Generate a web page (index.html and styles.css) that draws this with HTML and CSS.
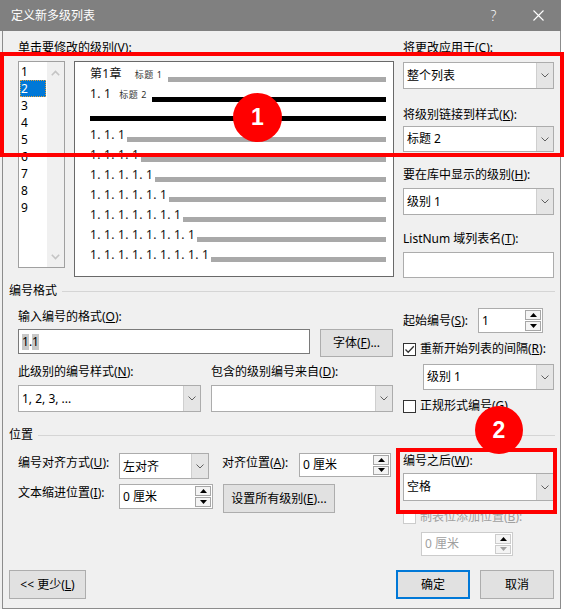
FILE: index.html
```html
<!DOCTYPE html>
<html lang="zh-CN">
<head>
<meta charset="utf-8">
<title>定义新多级列表</title>
<link rel="stylesheet" href="styles.css">
</head>
<body>
<div class="dialog">
  <div class="titlebar">
    <span class="title">定义新多级列表</span>
    <span class="tb-btn help">?</span>
    <span class="tb-btn close"><svg width="11" height="11" viewBox="0 0 11 11"><path d="M0.5 0.5 L10.5 10.5 M10.5 0.5 L0.5 10.5" stroke="#fff" stroke-width="1.1" fill="none"/></svg></span>
  </div>
  <div class="frame">
    <div class="top">
      <div class="top-left">
        <div class="lbl">单击要修改的级别(<u>V</u>):</div>
        <div class="level-row">
          <div class="levels">
            <ul class="level-items">
              <li>1</li>
              <li class="sel">2</li>
              <li>3</li>
              <li>4</li>
              <li>5</li>
              <li>6</li>
              <li>7</li>
              <li>8</li>
              <li>9</li>
            </ul>
            <div class="vscroll">
              <svg width="9" height="6" viewBox="0 0 9 6"><path d="M0.8 5.2 L4.5 1.5 L8.2 5.2" fill="none" stroke="#c4c4c4" stroke-width="1.6"/></svg>
              <svg width="9" height="6" viewBox="0 0 9 6"><path d="M0.8 0.8 L4.5 4.5 L8.2 0.8" fill="none" stroke="#c4c4c4" stroke-width="1.6"/></svg>
            </div>
          </div>
          <div class="preview">
            <div class="prow"><span class="num">第1章<span class="sty sty1">标题 1</span></span><i class="bar"></i></div>
            <div class="prow"><span class="num">1. 1<span class="sty sty2">标题 2</span></span><i class="bar blk"></i></div>
            <div class="prow"><i class="bar blk full"></i></div>
            <div class="prow"><span class="num">1. 1. 1</span><i class="bar"></i></div>
            <div class="prow"><span class="num">1. 1. 1. 1</span><i class="bar"></i></div>
            <div class="prow"><span class="num">1. 1. 1. 1. 1</span><i class="bar"></i></div>
            <div class="prow"><span class="num">1. 1. 1. 1. 1. 1</span><i class="bar"></i></div>
            <div class="prow"><span class="num">1. 1. 1. 1. 1. 1. 1</span><i class="bar"></i></div>
            <div class="prow"><span class="num">1. 1. 1. 1. 1. 1. 1. 1</span><i class="bar"></i></div>
            <div class="prow"><span class="num">1. 1. 1. 1. 1. 1. 1. 1. 1</span><i class="bar"></i></div>
          </div>
        </div>
      </div>
      <div class="col-right">
        <div class="lbl">将更改应用于(<u>C</u>):</div>
        <div class="combo r-c1"><span class="val">整个列表</span><span class="drop"><svg width="8" height="5" viewBox="0 0 8 5"><path d="M0.5 0.5 L4 4 L7.5 0.5" fill="none" stroke="#606060"/></svg></span></div>
        <div class="lbl r-l2">将级别链接到样式(<u>K</u>):</div>
        <div class="combo r-c2"><span class="val">标题 2</span><span class="drop"><svg width="8" height="5" viewBox="0 0 8 5"><path d="M0.5 0.5 L4 4 L7.5 0.5" fill="none" stroke="#606060"/></svg></span></div>
        <div class="lbl r-l3">要在库中显示的级别(<u>H</u>):</div>
        <div class="combo r-c3"><span class="val">级别 1</span><span class="drop"><svg width="8" height="5" viewBox="0 0 8 5"><path d="M0.5 0.5 L4 4 L7.5 0.5" fill="none" stroke="#606060"/></svg></span></div>
        <div class="lbl r-l4">ListNum 域列表名(<u>T</u>):</div>
        <div class="textbox r-t4"></div>
      </div>
    </div>

    <div class="group-head gh1"><span>编号格式</span><i class="rule"></i></div>
    <div class="grp">
      <div class="g-left">
        <div class="lbl g1-l1">输入编号的格式(<u>O</u>):</div>
        <div class="fmt-row">
          <div class="textbox fmt-input"><span class="fld">1</span>.<span class="fld">1</span></div>
          <div class="btn font-btn">字体(<u>F</u>)...</div>
        </div>
        <div class="pair lbl-pair">
          <div class="lbl">此级别的编号样式(<u>N</u>):</div>
          <div class="lbl">包含的级别编号来自(<u>D</u>):</div>
        </div>
        <div class="pair sel-pair">
          <div class="combo h27"><span class="val">1, 2, 3, ...</span><span class="drop"><svg width="8" height="5" viewBox="0 0 8 5"><path d="M0.5 0.5 L4 4 L7.5 0.5" fill="none" stroke="#606060"/></svg></span></div>
          <div class="combo h27"><span class="val"></span><span class="drop"><svg width="8" height="5" viewBox="0 0 8 5"><path d="M0.5 0.5 L4 4 L7.5 0.5" fill="none" stroke="#606060"/></svg></span></div>
        </div>
      </div>
      <div class="g-right">
        <div class="start-row">
          <span class="lbl start-lbl">起始编号(<u>S</u>):</span>
          <div class="spin start-spin">
            <span class="sv">1</span>
            <span class="sbtns">
              <span class="sb"><svg width="7" height="4" viewBox="0 0 7 4"><path d="M0 4 L3.5 0 L7 4Z" fill="#000"/></svg></span>
              <span class="sb"><svg width="7" height="4" viewBox="0 0 7 4"><path d="M0 0 L3.5 4 L7 0Z" fill="#000"/></svg></span>
            </span>
          </div>
        </div>
        <div class="chk-row cr1">
          <span class="chk"><svg width="11" height="11" viewBox="0 0 11 11"><path d="M1.5 5.5 L4.2 8.3 L9.8 2.2" fill="none" stroke="#333" stroke-width="1.3"/></svg></span>
          <span class="chk-lbl">重新开始列表的间隔(<u>R</u>):</span>
        </div>
        <div class="combo restart-combo"><span class="val">级别 1</span><span class="drop"><svg width="8" height="5" viewBox="0 0 8 5"><path d="M0.5 0.5 L4 4 L7.5 0.5" fill="none" stroke="#606060"/></svg></span></div>
        <div class="chk-row cr2">
          <span class="chk"></span>
          <span class="chk-lbl">正规形式编号(<u>G</u>)</span>
        </div>
      </div>
    </div>

    <div class="group-head gh2"><span>位置</span><i class="rule"></i></div>
    <div class="grp">
      <div class="g-left">
        <div class="pos-row pr1">
          <span class="lbl plbl plbl1">编号对齐方式(<u>U</u>):</span>
          <div class="combo align-combo"><span class="val val-low">左对齐</span><span class="drop"><svg width="8" height="5" viewBox="0 0 8 5"><path d="M0.5 0.5 L4 4 L7.5 0.5" fill="none" stroke="#606060"/></svg></span></div>
          <span class="lbl plbl plbl2">对齐位置(<u>A</u>):</span>
          <div class="spin align-spin">
            <span class="sv">0 厘米</span>
            <span class="sbtns">
              <span class="sb"><svg width="7" height="4" viewBox="0 0 7 4"><path d="M0 4 L3.5 0 L7 4Z" fill="#000"/></svg></span>
              <span class="sb"><svg width="7" height="4" viewBox="0 0 7 4"><path d="M0 0 L3.5 4 L7 0Z" fill="#000"/></svg></span>
            </span>
          </div>
        </div>
        <div class="pos-row pr2">
          <span class="lbl plbl plbl3">文本缩进位置(<u>I</u>):</span>
          <div class="spin indent-spin">
            <span class="sv">0 厘米</span>
            <span class="sbtns">
              <span class="sb"><svg width="7" height="4" viewBox="0 0 7 4"><path d="M0 4 L3.5 0 L7 4Z" fill="#000"/></svg></span>
              <span class="sb"><svg width="7" height="4" viewBox="0 0 7 4"><path d="M0 0 L3.5 4 L7 0Z" fill="#000"/></svg></span>
            </span>
          </div>
          <div class="btn all-btn">设置所有级别(<u>E</u>)...</div>
        </div>
      </div>
      <div class="g-right">
        <div class="lbl after-lbl">编号之后(<u>W</u>):</div>
        <div class="combo after-combo"><span class="val">空格</span><span class="drop"><svg width="8" height="5" viewBox="0 0 8 5"><path d="M0.5 0.5 L4 4 L7.5 0.5" fill="none" stroke="#606060"/></svg></span></div>
        <div class="chk-row cr3 disabled">
          <span class="chk"></span>
          <span class="chk-lbl">制表位添加位置(<u>B</u>):</span>
        </div>
        <div class="spin tab-spin disabled">
          <span class="sv">0 厘米</span>
          <span class="sbtns">
            <span class="sb"><svg width="7" height="4" viewBox="0 0 7 4"><path d="M0 4 L3.5 0 L7 4Z" fill="#000"/></svg></span>
            <span class="sb"><svg width="7" height="4" viewBox="0 0 7 4"><path d="M0 0 L3.5 4 L7 0Z" fill="#a0a0a0"/></svg></span>
          </span>
        </div>
      </div>
    </div>

    <div class="footer">
      <div class="btn less-btn">&lt;&lt; 更少(<u>L</u>)</div>
      <div class="btn ok-btn">确定</div>
      <div class="btn cancel-btn">取消</div>
    </div>
  </div>
</div>

<div class="mark mark1"></div>
<div class="mark mark2"></div>
<div class="badge badge1">1</div>
<div class="badge badge2">2</div>
</body>
</html>
```

FILE: styles.css
```css
* { box-sizing: border-box; }
html, body { margin: 0; padding: 0; background: #ffffff; }
body {
  position: relative;
  width: 564px;
  height: 610px;
  font-family: "Noto Sans", "Noto Sans CJK SC", sans-serif;
  font-size: 12px;
  line-height: 16px;
  color: #000;
  overflow: hidden;
}
u { text-decoration: underline; text-underline-offset: 1px; }

.dialog { width: 561px; height: 609px; background: #f0f0f0; }

.titlebar {
  height: 31px;
  background: #808080;
  color: #fff;
  display: flex;
  align-items: center;
  padding-left: 11px;
}
.title { flex: 1; font-size: 12px; }
.tb-btn { width: 45px; height: 31px; display: flex; align-items: center; justify-content: center; }
.help { font-size: 14px; font-family: "Open Sans", "Noto Sans", sans-serif; font-weight: 300; }

.frame {
  margin-left: 2px;
  width: 559px;
  height: 578px;
  border: 1px solid #8c8c8c;
  border-top: none;
}

.lbl { line-height: 16px; white-space: nowrap; }

/* top section */
.top { display: flex; gap: 9px; padding: 9px 6px 0 15px; }
.top-left { width: 376px; }
.col-right { width: 151px; }

.level-row { display: flex; gap: 9px; margin-top: 5px; align-items: flex-start; }
.levels {
  width: 47px;
  height: 207px;
  border: 1px solid #a0a0a0;
  background: #fff;
  display: flex;
}
.level-items { list-style: none; margin: 0; padding: 1px 0 0 1px; width: 28px; }
.level-items li { height: 17px; line-height: 17px; padding-left: 1px; width: 26px; font-size: 12px; }
.level-items li.sel { background: #0078d7; color: #fff; outline: 1px dotted #e0a040; outline-offset: -1px; }
.vscroll {
  width: 17px;
  background: #f0f0f0;
  display: flex;
  flex-direction: column;
  justify-content: space-between;
  align-items: center;
  padding: 8px 0 7px;
}

.preview {
  width: 320px;
  height: 216px;
  border: 1px solid #696969;
  background: #fff;
  padding: 2px 7px 0 15px;
}
.prow { display: flex; align-items: flex-end; height: 20px; padding-bottom: 2px; }
.num { font-size: 12px; line-height: 16px; letter-spacing: 0.27px; white-space: pre; margin-bottom: -1px; color: #111; }
.sty { font-size: 9px; letter-spacing: 0.6px; color: #333; }
.sty1 { margin-left: 13px; }
.sty2 { margin-left: 8px; }
.bar { flex: 1; height: 5px; background: #a9a9a9; margin-left: 2px; }
.prow:first-child .bar, .prow:nth-child(2) .bar { margin-left: 5px; }
.bar.blk { background: #000; }
.bar.full { margin-left: 0; margin-bottom: 1px; }

/* combos, inputs */
.combo {
  display: flex;
  border: 1px solid #acacac;
  background: #fff;
}
.combo .val { flex: 1; padding-left: 3px; display: flex; align-items: center; white-space: nowrap; }
.combo .drop {
  width: 17px;
  background: #e5e5e5;
  border-left: 1px solid #cfcfcf;
  display: flex;
  align-items: center;
  justify-content: center;
}
.textbox { border: 1px solid #acacac; background: #fff; }

.r-c1 { margin-top: 6px; height: 27px; }
.r-l2 { margin-top: 18px; }
.r-c2 { margin-top: 3px; height: 26px; }
.r-l3 { margin-top: 15px; }
.r-c3 { margin-top: 5px; height: 27px; }
.r-l4 { margin-top: 16px; }
.r-t4 { margin-top: 5px; height: 26px; }

/* group heads */
.group-head { display: flex; align-items: center; gap: 5px; padding: 0 5px 0 6px; height: 16px; }
.group-head .rule { flex: 1; height: 1px; background: #d5d5d5; }
.gh1 { margin-top: 5px; }
.gh2 { margin-top: 13px; }

.grp { display: flex; gap: 10px; padding: 0 6px 0 15px; }
.g-left { width: 375px; }
.g-right { width: 151px; }

.g1-l1 { margin-top: 10px; }
.fmt-row { display: flex; gap: 10px; margin-top: 4px; align-items: flex-start; }
.fmt-input {
  width: 292px;
  height: 25px;
  border-color: #7a7a7a;
  display: flex;
  align-items: center;
  padding-left: 3px;
}
.fld { background: #c8c8c8; }

.btn {
  background: #e1e1e1;
  border: 1px solid #adadad;
  display: flex;
  align-items: center;
  justify-content: center;
  white-space: nowrap;
}
.font-btn { width: 73px; height: 28px; }

.pair { display: grid; grid-template-columns: 183px 182px; column-gap: 10px; }
.lbl-pair { margin-top: 7px; }
.sel-pair { margin-top: 5px; }
.h27 { height: 27px; }

/* spin */
.spin { display: flex; border: 1px solid #acacac; background: #fff; }
.spin .sv { flex: 1; padding-left: 3px; display: flex; align-items: center; white-space: nowrap; }
.sbtns { width: 17px; display: flex; flex-direction: column; gap: 1px; padding: 1px 1px 1px 0; }
.sb {
  flex: 1;
  border: 1px solid #a6a6a6;
  background: #f4f4f4;
  display: flex;
  align-items: center;
  justify-content: center;
}

.start-row { display: flex; align-items: center; margin-top: 9px; }
.start-lbl { width: 75px; }
.start-spin { width: 65px; height: 25px; }

.chk-row { display: flex; align-items: center; height: 16px; }
.chk {
  width: 13px;
  height: 13px;
  border: 1px solid #333;
  background: #fff;
  display: flex;
  align-items: center;
  justify-content: center;
}
.chk-lbl { margin-left: 4px; white-space: nowrap; }
.cr1 { margin-top: 8px; }
.restart-combo { margin: 7px 0 0 20px; width: 131px; height: 26px; }
.cr2 { margin-top: 8px; }

/* position */
.pos-row { display: flex; align-items: flex-start; }
.pr1 { margin-top: 10px; }
.pr2 { margin-top: 5px; }
.plbl { width: 101px; }
.plbl1 { margin-top: 2px; }
.plbl2 { width: 77px; margin-left: 13px; margin-top: 2px; }
.plbl3 { margin-top: 1px; }
.align-combo { width: 90px; height: 26px; }
.val-low { padding-top: 2px; }
.align-spin { width: 92px; height: 24px; }
.indent-spin { width: 94px; height: 25px; }
.all-btn { width: 112px; height: 29px; margin-left: 10px; }

.after-lbl { margin-top: 10px; }
.after-combo { margin-top: 4px; height: 28px; }
.cr3 { margin-top: 8px; }
.disabled { color: #a0a0a0; }
.disabled .chk { border-color: #cccccc; }
.tab-spin { margin: 7px 0 0 18px; width: 92px; height: 24px; border-color: #cccccc; }
.tab-spin .sb { border-color: #cccccc; }

/* footer */
.footer { display: flex; margin-top: 14px; padding: 0 6px; }
.less-btn { width: 77px; height: 29px; }
.ok-btn { width: 74px; height: 29px; margin-left: auto; border: 2px solid #0078d7; }
.cancel-btn { width: 74px; height: 29px; margin-left: 10px; }

/* annotations */
.mark { position: absolute; border: 4px solid #ff0000; }
.mark1 { left: 0; top: 52px; width: 564px; height: 105px; }
.mark2 { left: 396px; top: 448px; width: 161px; height: 66px; }
.badge {
  position: absolute;
  width: 49px;
  height: 49px;
  border-radius: 50%;
  background: #ff0000;
  color: #fff;
  font-family: "Liberation Sans", "Noto Sans", sans-serif;
  font-weight: bold;
  font-size: 23px;
  line-height: 49px;
  text-align: center;
}
.badge1 { left: 233px; top: 93px; }
.badge2 { left: 475px; top: 406px; width: 48px; height: 48px; line-height: 48px; }
```
